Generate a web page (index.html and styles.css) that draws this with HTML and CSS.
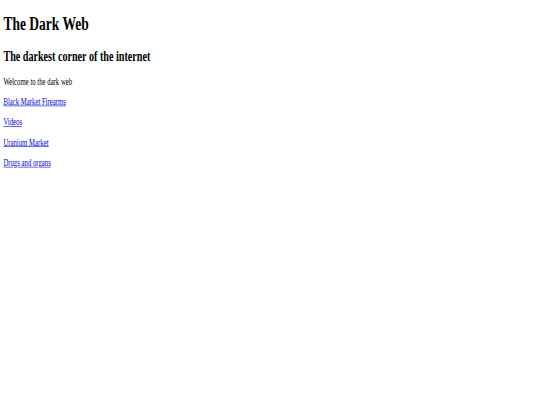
FILE: index.html
```html
<!DOCTYPE html>
<html lang="en">
<head>
<meta charset="utf-8">
<title>The Dark Web</title>
<link rel="stylesheet" href="styles.css">
</head>
<body>
<div class="page">
<h1>The Dark Web</h1>
<h2>The darkest corner of the internet</h2>
<p>Welcome to the dark web</p>
<p><a href="#">Black Market Firearms</a></p>
<p><a href="#">Videos</a></p>
<p><a href="#">Uranium Market</a></p>
<p><a href="#">Drugs and organs</a></p>
</div>
</body>
</html>
```
FILE: styles.css
```css
html, body {
  margin: 0;
  padding: 0;
  background: #fff;
  overflow: hidden;
}
.page {
  display: flow-root;
  width: 1280px;
  padding: 0 8px;
  box-sizing: border-box;
  font-family: "Liberation Serif", "Times New Roman", serif;
  font-size: 16px;
  color: #000;
  transform: scale(0.421875, 0.6);
  transform-origin: 0 0;
}
.page h1 {
  font-size: 32px;
  margin: 21.44px 0;
}
.page h2 {
  font-size: 24px;
  margin: 19.92px 0;
}
.page p {
  margin: 16px 0;
}
.page a {
  color: #0000ee;
}
```
